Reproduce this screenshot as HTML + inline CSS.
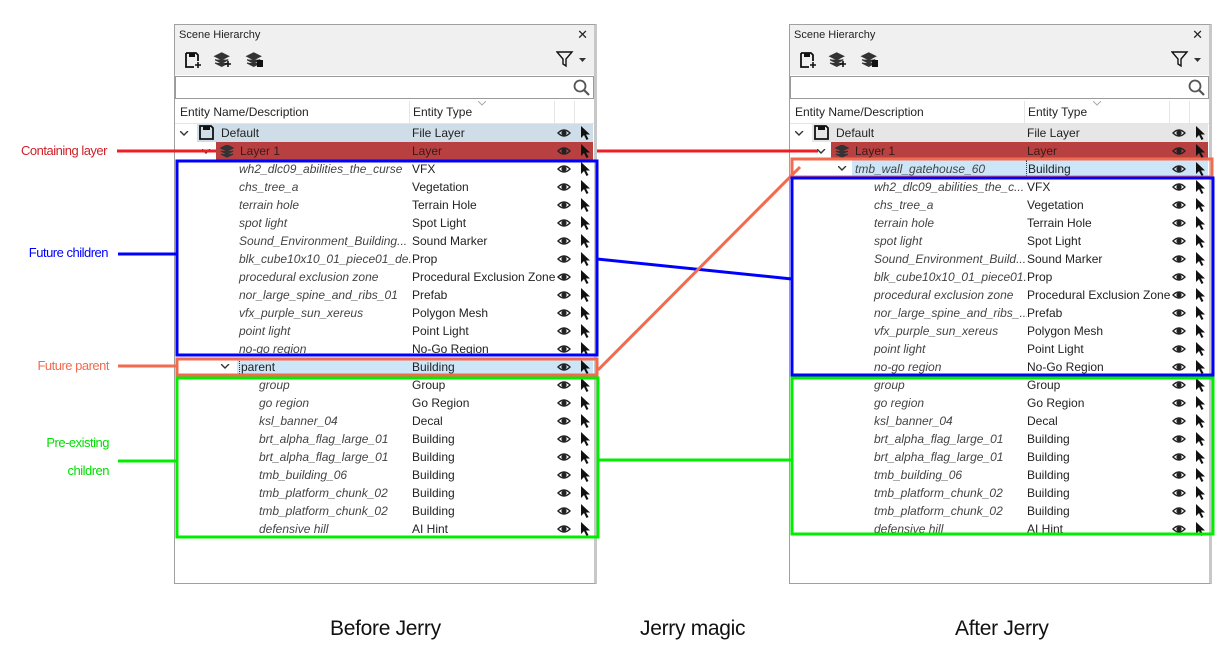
<!DOCTYPE html>
<html><head><meta charset="utf-8"><style>
body{margin:0;width:1230px;height:666px;background:#fff;position:relative;overflow:hidden;font-family:"Liberation Sans",sans-serif;}
.a{position:absolute}
.p{position:absolute;top:24px;width:423px;height:560px;border:1px solid #a0a0a0;border-right:3px solid #c8c8c8;background:#fff;box-sizing:border-box}
.tb{position:absolute;left:0;right:0;top:0;height:20px;background:#f0f0f0;border-bottom:1px solid #d8d8d8;font-size:11px;line-height:20px;padding-left:4px;color:#222}
.tl{position:absolute;left:0;right:0;top:20px;height:30px;background:#f0f0f0}
.sr{position:absolute;left:0;right:0;top:51px;height:21px;border:1px solid #9a9a9a;background:#fff}
.hd{position:absolute;left:0;right:0;top:76px;height:22px;background:#fff;border-bottom:1px solid #e5e5e5;font-size:12px;line-height:22px;color:#222}
.r{position:absolute;left:0;width:420px;height:18px;font-size:12px;line-height:18px;color:#222}
.n{position:absolute;font-style:italic;color:#444;white-space:nowrap}
.t{position:absolute;left:237px}
.e{position:absolute;left:382px;top:4px}
.c{position:absolute;left:405px;top:2px}
.lab{position:absolute;font-size:13px;letter-spacing:-0.5px;text-align:right;width:110px;left:0}
.cap{position:absolute;font-size:21px;color:#111;top:617px;letter-spacing:-0.3px}
</style></head><body>
<svg width="0" height="0" style="position:absolute"><defs>
<g id="eye"><path d="M1 5 Q7 -1 13 5 Q7 11 1 5Z" fill="none" stroke="#222" stroke-width="1.4"/><circle cx="7" cy="5" r="2.6" fill="#222"/></g>
<g id="cur"><path d="M1 0 L1 12 L4 9 L6.5 14 L8.5 13 L6 8.5 L10 8.5Z" fill="#111"/></g>
<g id="chev"><path d="M0 0 L4 4 L8 0" fill="none" stroke="#333" stroke-width="1.4"/></g>
<g id="lay"><path d="M1 3 L7 0 L13 3 L7 6Z M1 6 L7 9 L13 6 M1 9 L7 12 L13 9" fill="#333" stroke="#333" stroke-width="1.3"/></g>
<g id="flop"><path d="M1 1 H12 L14 3 V14 H1Z" fill="none" stroke="#111" stroke-width="1.8"/><rect x="4" y="1" width="7" height="4" fill="#111"/></g>
</defs></svg>

<!-- LEFT PANEL -->
<div class="p" style="left:174px">
 <div class="tb">Scene Hierarchy<span style="position:absolute;right:6px;font-size:13px">✕</span></div>
 <div class="tl">
  <svg class="a" style="left:10px;top:7px" width="18" height="18"><path d="M1 1 H11 L13 3 V9 M9 15 H1 V1" fill="none" stroke="#111" stroke-width="1.8"/><rect x="4" y="1" width="6" height="4" fill="#111"/><path d="M13 10 V16 M10 13 H16" stroke="#111" stroke-width="1.6"/></svg>
  <svg class="a" style="left:38px;top:6px" width="20" height="18"><use href="#lay" transform="translate(1,2) scale(1.1)"/><path d="M15 10 V16 M12 13 H18" stroke="#111" stroke-width="1.6"/></svg>
  <svg class="a" style="left:70px;top:6px" width="20" height="18"><use href="#lay" transform="translate(1,2) scale(1.1)"/><rect x="12" y="9" width="6" height="7" fill="#111"/></svg>
  <svg class="a" style="left:381px;top:5px" width="18" height="18"><path d="M1 2 H16 L10 9 V16 L7 14 V9Z" fill="none" stroke="#111" stroke-width="1.4"/></svg>
  <svg class="a" style="left:404px;top:13px" width="8" height="5"><path d="M0 0 H7 L3.5 4Z" fill="#333"/></svg>
 </div>
 <div class="sr"><svg class="a" style="right:3px;top:2px" width="17" height="17"><circle cx="7" cy="7" r="5.5" fill="none" stroke="#555" stroke-width="1.8"/><path d="M11 11 L16 16" stroke="#555" stroke-width="2.2"/></svg></div>
 <div class="hd"><span class="a" style="left:5px">Entity Name/Description</span><span class="a" style="left:234px;border-left:1px solid #e5e5e5;padding-left:3px;height:22px">Entity Type</span><span class="a" style="left:379px;width:19px;height:22px;border-left:1px solid #e5e5e5;border-right:1px solid #e5e5e5"></span><svg class="a" style="left:303px;top:0" width="8" height="5"><path d="M0 0 L4 4 L8 0" fill="none" stroke="#aaa"/></svg></div>
</div>

<!-- RIGHT PANEL -->
<div class="p" style="left:789px">
 <div class="tb">Scene Hierarchy<span style="position:absolute;right:6px;font-size:13px">✕</span></div>
 <div class="tl">
  <svg class="a" style="left:10px;top:7px" width="18" height="18"><path d="M1 1 H11 L13 3 V9 M9 15 H1 V1" fill="none" stroke="#111" stroke-width="1.8"/><rect x="4" y="1" width="6" height="4" fill="#111"/><path d="M13 10 V16 M10 13 H16" stroke="#111" stroke-width="1.6"/></svg>
  <svg class="a" style="left:38px;top:6px" width="20" height="18"><use href="#lay" transform="translate(1,2) scale(1.1)"/><path d="M15 10 V16 M12 13 H18" stroke="#111" stroke-width="1.6"/></svg>
  <svg class="a" style="left:70px;top:6px" width="20" height="18"><use href="#lay" transform="translate(1,2) scale(1.1)"/><rect x="12" y="9" width="6" height="7" fill="#111"/></svg>
  <svg class="a" style="left:381px;top:5px" width="18" height="18"><path d="M1 2 H16 L10 9 V16 L7 14 V9Z" fill="none" stroke="#111" stroke-width="1.4"/></svg>
  <svg class="a" style="left:404px;top:13px" width="8" height="5"><path d="M0 0 H7 L3.5 4Z" fill="#333"/></svg>
 </div>
 <div class="sr"><svg class="a" style="right:3px;top:2px" width="17" height="17"><circle cx="7" cy="7" r="5.5" fill="none" stroke="#555" stroke-width="1.8"/><path d="M11 11 L16 16" stroke="#555" stroke-width="2.2"/></svg></div>
 <div class="hd"><span class="a" style="left:5px">Entity Name/Description</span><span class="a" style="left:234px;border-left:1px solid #e5e5e5;padding-left:3px;height:22px">Entity Type</span><span class="a" style="left:379px;width:19px;height:22px;border-left:1px solid #e5e5e5;border-right:1px solid #e5e5e5"></span><svg class="a" style="left:303px;top:0" width="8" height="5"><path d="M0 0 L4 4 L8 0" fill="none" stroke="#aaa"/></svg></div>
</div>

<!-- LEFT ROWS (panel left 174) -->
<div class="a" style="left:175px;top:124px">
 <div class="r" style="top:0"><div class="a" style="left:22px;width:396px;height:18px;background:#cfdde8"></div><svg class="a" style="left:5px;top:7px" width="9" height="6"><use href="#chev"/></svg><svg class="a" style="left:24px;top:1px" width="16" height="16"><use href="#flop"/></svg><span class="a" style="left:46px">Default</span><span class="t">File Layer</span><svg class="e" width="14" height="10"><use href="#eye"/></svg><svg class="c" width="11" height="15"><use href="#cur"/></svg></div>
 <div class="r" style="top:18px"><div class="a" style="left:41px;width:377px;height:18px;background:#b94040"></div><svg class="a" style="left:27px;top:7px" width="9" height="6"><use href="#chev"/></svg><svg class="a" style="left:45px;top:3px" width="15" height="13"><use href="#lay"/></svg><span class="a" style="left:65px;color:#3a1a1a">Layer 1</span><span class="t" style="color:#3a1a1a">Layer</span><svg class="e" width="14" height="10"><use href="#eye"/></svg><svg class="c" width="11" height="15"><use href="#cur"/></svg></div>
 <div class="r" style="top:36px"><span class="n" style="left:64px">wh2_dlc09_abilities_the_curse</span><span class="t">VFX</span><svg class="e" width="14" height="10"><use href="#eye"/></svg><svg class="c" width="11" height="15"><use href="#cur"/></svg></div>
 <div class="r" style="top:54px"><span class="n" style="left:64px">chs_tree_a</span><span class="t">Vegetation</span><svg class="e" width="14" height="10"><use href="#eye"/></svg><svg class="c" width="11" height="15"><use href="#cur"/></svg></div>
 <div class="r" style="top:72px"><span class="n" style="left:64px">terrain hole</span><span class="t">Terrain Hole</span><svg class="e" width="14" height="10"><use href="#eye"/></svg><svg class="c" width="11" height="15"><use href="#cur"/></svg></div>
 <div class="r" style="top:90px"><span class="n" style="left:64px">spot light</span><span class="t">Spot Light</span><svg class="e" width="14" height="10"><use href="#eye"/></svg><svg class="c" width="11" height="15"><use href="#cur"/></svg></div>
 <div class="r" style="top:108px"><span class="n" style="left:64px">Sound_Environment_Building...</span><span class="t">Sound Marker</span><svg class="e" width="14" height="10"><use href="#eye"/></svg><svg class="c" width="11" height="15"><use href="#cur"/></svg></div>
 <div class="r" style="top:126px"><span class="n" style="left:64px">blk_cube10x10_01_piece01_de...</span><span class="t" style="background:#fff">Prop</span><svg class="e" width="14" height="10"><use href="#eye"/></svg><svg class="c" width="11" height="15"><use href="#cur"/></svg></div>
 <div class="r" style="top:144px"><span class="n" style="left:64px">procedural exclusion zone</span><span class="t">Procedural Exclusion Zone</span><svg class="e" width="14" height="10"><use href="#eye"/></svg><svg class="c" width="11" height="15"><use href="#cur"/></svg></div>
 <div class="r" style="top:162px"><span class="n" style="left:64px">nor_large_spine_and_ribs_01</span><span class="t">Prefab</span><svg class="e" width="14" height="10"><use href="#eye"/></svg><svg class="c" width="11" height="15"><use href="#cur"/></svg></div>
 <div class="r" style="top:180px"><span class="n" style="left:64px">vfx_purple_sun_xereus</span><span class="t">Polygon Mesh</span><svg class="e" width="14" height="10"><use href="#eye"/></svg><svg class="c" width="11" height="15"><use href="#cur"/></svg></div>
 <div class="r" style="top:198px"><span class="n" style="left:64px">point light</span><span class="t">Point Light</span><svg class="e" width="14" height="10"><use href="#eye"/></svg><svg class="c" width="11" height="15"><use href="#cur"/></svg></div>
 <div class="r" style="top:216px"><span class="n" style="left:64px">no-go region</span><span class="t">No-Go Region</span><svg class="e" width="14" height="10"><use href="#eye"/></svg><svg class="c" width="11" height="15"><use href="#cur"/></svg></div>
 <div class="r" style="top:234px"><div class="a" style="left:62px;width:356px;height:18px;background:#cde6f7"></div><svg class="a" style="left:46px;top:6px" width="9" height="6"><use href="#chev"/></svg><span class="a" style="left:64px;border-left:1px dotted #333;padding-left:1px">parent</span><span class="t">Building</span><svg class="e" width="14" height="10"><use href="#eye"/></svg><svg class="c" width="11" height="15"><use href="#cur"/></svg></div>
 <div class="r" style="top:252px"><span class="n" style="left:84px">group</span><span class="t">Group</span><svg class="e" width="14" height="10"><use href="#eye"/></svg><svg class="c" width="11" height="15"><use href="#cur"/></svg></div>
 <div class="r" style="top:270px"><span class="n" style="left:84px">go region</span><span class="t">Go Region</span><svg class="e" width="14" height="10"><use href="#eye"/></svg><svg class="c" width="11" height="15"><use href="#cur"/></svg></div>
 <div class="r" style="top:288px"><span class="n" style="left:84px">ksl_banner_04</span><span class="t">Decal</span><svg class="e" width="14" height="10"><use href="#eye"/></svg><svg class="c" width="11" height="15"><use href="#cur"/></svg></div>
 <div class="r" style="top:306px"><span class="n" style="left:84px">brt_alpha_flag_large_01</span><span class="t">Building</span><svg class="e" width="14" height="10"><use href="#eye"/></svg><svg class="c" width="11" height="15"><use href="#cur"/></svg></div>
 <div class="r" style="top:324px"><span class="n" style="left:84px">brt_alpha_flag_large_01</span><span class="t">Building</span><svg class="e" width="14" height="10"><use href="#eye"/></svg><svg class="c" width="11" height="15"><use href="#cur"/></svg></div>
 <div class="r" style="top:342px"><span class="n" style="left:84px">tmb_building_06</span><span class="t">Building</span><svg class="e" width="14" height="10"><use href="#eye"/></svg><svg class="c" width="11" height="15"><use href="#cur"/></svg></div>
 <div class="r" style="top:360px"><span class="n" style="left:84px">tmb_platform_chunk_02</span><span class="t">Building</span><svg class="e" width="14" height="10"><use href="#eye"/></svg><svg class="c" width="11" height="15"><use href="#cur"/></svg></div>
 <div class="r" style="top:378px"><span class="n" style="left:84px">tmb_platform_chunk_02</span><span class="t">Building</span><svg class="e" width="14" height="10"><use href="#eye"/></svg><svg class="c" width="11" height="15"><use href="#cur"/></svg></div>
 <div class="r" style="top:396px"><span class="n" style="left:84px">defensive hill</span><span class="t">AI Hint</span><svg class="e" width="14" height="10"><use href="#eye"/></svg><svg class="c" width="11" height="15"><use href="#cur"/></svg></div>
</div>

<!-- RIGHT ROWS -->
<div class="a" style="left:790px;top:124px">
 <div class="r" style="top:0"><div class="a" style="left:22px;width:396px;height:18px;background:#e6e6e6"></div><svg class="a" style="left:5px;top:7px" width="9" height="6"><use href="#chev"/></svg><svg class="a" style="left:24px;top:1px" width="16" height="16"><use href="#flop"/></svg><span class="a" style="left:46px">Default</span><span class="t">File Layer</span><svg class="e" width="14" height="10"><use href="#eye"/></svg><svg class="c" width="11" height="15"><use href="#cur"/></svg></div>
 <div class="r" style="top:18px"><div class="a" style="left:41px;width:377px;height:18px;background:#b94040"></div><svg class="a" style="left:27px;top:7px" width="9" height="6"><use href="#chev"/></svg><svg class="a" style="left:45px;top:3px" width="15" height="13"><use href="#lay"/></svg><span class="a" style="left:65px;color:#3a1a1a">Layer 1</span><span class="t" style="color:#3a1a1a">Layer</span><svg class="e" width="14" height="10"><use href="#eye"/></svg><svg class="c" width="11" height="15"><use href="#cur"/></svg></div>
 <div class="r" style="top:36px"><div class="a" style="left:62px;width:356px;height:18px;background:#cde6f7"></div><svg class="a" style="left:48px;top:6px" width="9" height="6"><use href="#chev"/></svg><span class="n" style="left:65px">tmb_wall_gatehouse_60</span><span class="t" style="border-left:1px dotted #333;padding-left:1px;left:236px">Building</span><svg class="e" width="14" height="10"><use href="#eye"/></svg><svg class="c" width="11" height="15"><use href="#cur"/></svg></div>
 <div class="r" style="top:54px"><span class="n" style="left:84px">wh2_dlc09_abilities_the_c...</span><span class="t">VFX</span><svg class="e" width="14" height="10"><use href="#eye"/></svg><svg class="c" width="11" height="15"><use href="#cur"/></svg></div>
 <div class="r" style="top:72px"><span class="n" style="left:84px">chs_tree_a</span><span class="t">Vegetation</span><svg class="e" width="14" height="10"><use href="#eye"/></svg><svg class="c" width="11" height="15"><use href="#cur"/></svg></div>
 <div class="r" style="top:90px"><span class="n" style="left:84px">terrain hole</span><span class="t">Terrain Hole</span><svg class="e" width="14" height="10"><use href="#eye"/></svg><svg class="c" width="11" height="15"><use href="#cur"/></svg></div>
 <div class="r" style="top:108px"><span class="n" style="left:84px">spot light</span><span class="t">Spot Light</span><svg class="e" width="14" height="10"><use href="#eye"/></svg><svg class="c" width="11" height="15"><use href="#cur"/></svg></div>
 <div class="r" style="top:126px"><span class="n" style="left:84px">Sound_Environment_Build...</span><span class="t">Sound Marker</span><svg class="e" width="14" height="10"><use href="#eye"/></svg><svg class="c" width="11" height="15"><use href="#cur"/></svg></div>
 <div class="r" style="top:144px"><span class="n" style="left:84px">blk_cube10x10_01_piece01...</span><span class="t" style="background:#fff">Prop</span><svg class="e" width="14" height="10"><use href="#eye"/></svg><svg class="c" width="11" height="15"><use href="#cur"/></svg></div>
 <div class="r" style="top:162px"><span class="n" style="left:84px">procedural exclusion zone</span><span class="t">Procedural Exclusion Zone</span><svg class="e" width="14" height="10"><use href="#eye"/></svg><svg class="c" width="11" height="15"><use href="#cur"/></svg></div>
 <div class="r" style="top:180px"><span class="n" style="left:84px">nor_large_spine_and_ribs_...</span><span class="t" style="background:#fff">Prefab</span><svg class="e" width="14" height="10"><use href="#eye"/></svg><svg class="c" width="11" height="15"><use href="#cur"/></svg></div>
 <div class="r" style="top:198px"><span class="n" style="left:84px">vfx_purple_sun_xereus</span><span class="t">Polygon Mesh</span><svg class="e" width="14" height="10"><use href="#eye"/></svg><svg class="c" width="11" height="15"><use href="#cur"/></svg></div>
 <div class="r" style="top:216px"><span class="n" style="left:84px">point light</span><span class="t">Point Light</span><svg class="e" width="14" height="10"><use href="#eye"/></svg><svg class="c" width="11" height="15"><use href="#cur"/></svg></div>
 <div class="r" style="top:234px"><span class="n" style="left:84px">no-go region</span><span class="t">No-Go Region</span><svg class="e" width="14" height="10"><use href="#eye"/></svg><svg class="c" width="11" height="15"><use href="#cur"/></svg></div>
 <div class="r" style="top:252px"><span class="n" style="left:84px">group</span><span class="t">Group</span><svg class="e" width="14" height="10"><use href="#eye"/></svg><svg class="c" width="11" height="15"><use href="#cur"/></svg></div>
 <div class="r" style="top:270px"><span class="n" style="left:84px">go region</span><span class="t">Go Region</span><svg class="e" width="14" height="10"><use href="#eye"/></svg><svg class="c" width="11" height="15"><use href="#cur"/></svg></div>
 <div class="r" style="top:288px"><span class="n" style="left:84px">ksl_banner_04</span><span class="t">Decal</span><svg class="e" width="14" height="10"><use href="#eye"/></svg><svg class="c" width="11" height="15"><use href="#cur"/></svg></div>
 <div class="r" style="top:306px"><span class="n" style="left:84px">brt_alpha_flag_large_01</span><span class="t">Building</span><svg class="e" width="14" height="10"><use href="#eye"/></svg><svg class="c" width="11" height="15"><use href="#cur"/></svg></div>
 <div class="r" style="top:324px"><span class="n" style="left:84px">brt_alpha_flag_large_01</span><span class="t">Building</span><svg class="e" width="14" height="10"><use href="#eye"/></svg><svg class="c" width="11" height="15"><use href="#cur"/></svg></div>
 <div class="r" style="top:342px"><span class="n" style="left:84px">tmb_building_06</span><span class="t">Building</span><svg class="e" width="14" height="10"><use href="#eye"/></svg><svg class="c" width="11" height="15"><use href="#cur"/></svg></div>
 <div class="r" style="top:360px"><span class="n" style="left:84px">tmb_platform_chunk_02</span><span class="t">Building</span><svg class="e" width="14" height="10"><use href="#eye"/></svg><svg class="c" width="11" height="15"><use href="#cur"/></svg></div>
 <div class="r" style="top:378px"><span class="n" style="left:84px">tmb_platform_chunk_02</span><span class="t">Building</span><svg class="e" width="14" height="10"><use href="#eye"/></svg><svg class="c" width="11" height="15"><use href="#cur"/></svg></div>
 <div class="r" style="top:396px"><span class="n" style="left:84px">defensive hill</span><span class="t">AI Hint</span><svg class="e" width="14" height="10"><use href="#eye"/></svg><svg class="c" width="11" height="15"><use href="#cur"/></svg></div>
</div>

<!-- annotations -->
<svg class="a" style="left:0;top:0" width="1230" height="666">
 <g fill="none" stroke-width="3">
  <path d="M117 151 H216 M597 151 H818" stroke="#ee1c24"/>
  <rect x="177" y="161" width="420" height="194" stroke="#0000ff"/>
  <path d="M118 254 H177 M597 259 L792 279" stroke="#0000ff"/>
  <rect x="177" y="359" width="420" height="16" stroke="#f26b4f"/>
  <path d="M118 366 H177 M598 370 L800 167" stroke="#f26b4f"/>
  <rect x="177" y="378" width="421" height="159" stroke="#00ee00"/>
  <path d="M118 461 H177 M598 460 H792" stroke="#00ee00"/>
  <rect x="792" y="159" width="420" height="18" stroke="#f26b4f"/>
  <rect x="792" y="178" width="421" height="197" stroke="#0000ff"/>
  <rect x="792" y="378" width="421" height="156" stroke="#00ee00"/>
 </g>
</svg>
<div class="lab" style="top:143px;color:#d02028;left:-3px">Containing layer</div>
<div class="lab" style="top:245px;color:#0000ff;left:-2px">Future children</div>
<div class="lab" style="top:358px;color:#f26b4f;left:-1px">Future parent</div>
<div class="lab" style="top:435px;color:#00dd00;left:-1px">Pre-existing</div>
<div class="lab" style="top:463px;color:#00dd00;left:-1px">children</div>
<div class="cap" style="left:330px">Before Jerry</div>
<div class="cap" style="left:640px">Jerry magic</div>
<div class="cap" style="left:955px">After Jerry</div>
</body></html>
